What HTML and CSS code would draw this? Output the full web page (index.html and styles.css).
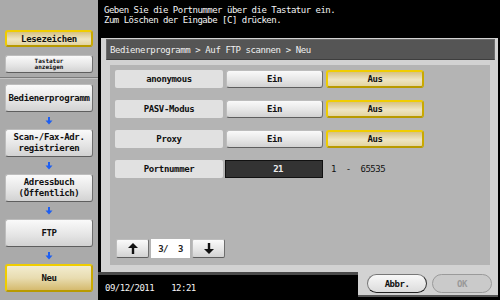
FILE: index.html
```html
<!DOCTYPE html>
<html lang="de">
<head>
  <meta charset="UTF-8" />
  <title>Bedienerprogramm — Auf FTP scannen</title>
  <link rel="stylesheet" href="styles.css">
</head>
<body>

<div class="screen">
  <div class="sidebar">
    <div class="side-top">
      <div class="btn yellow side-btn">Lesezeichen</div>
      <div class="btn side-btn small"><span>Tastatur</span><span>anzeigen</span></div>
    </div>
    <div class="side-steps">
      <div class="btn side-btn step">Bedienerprogramm</div>
      <div class="down"><svg width="8" height="8" viewBox="0 0 8 8"><rect x="3" y="0" width="2" height="4" fill="#1d5ef2"/><polygon points="0.5,3.5 7.5,3.5 4,7.5" fill="#1d5ef2"/></svg></div>
      <div class="btn side-btn step">Scan-/Fax-Adr.<br>registrieren</div>
      <div class="down"><svg width="8" height="8" viewBox="0 0 8 8"><rect x="3" y="0" width="2" height="4" fill="#1d5ef2"/><polygon points="0.5,3.5 7.5,3.5 4,7.5" fill="#1d5ef2"/></svg></div>
      <div class="btn side-btn step">Adressbuch<br>(Öffentlich)</div>
      <div class="down"><svg width="8" height="8" viewBox="0 0 8 8"><rect x="3" y="0" width="2" height="4" fill="#1d5ef2"/><polygon points="0.5,3.5 7.5,3.5 4,7.5" fill="#1d5ef2"/></svg></div>
      <div class="btn side-btn step">FTP</div>
      <div class="down"><svg width="8" height="8" viewBox="0 0 8 8"><rect x="3" y="0" width="2" height="4" fill="#1d5ef2"/><polygon points="0.5,3.5 7.5,3.5 4,7.5" fill="#1d5ef2"/></svg></div>
      <div class="btn yellow side-btn step">Neu</div>
    </div>
  </div>

  <div class="main">
    <div class="message">
      Geben Sie die Portnummer über die Tastatur ein.<br>
      Zum Löschen der Eingabe [C] drücken.
    </div>

    <div class="panel">
      <div class="crumbs">Bedienerprogramm &gt; Auf FTP scannen &gt; Neu</div>
      <div class="content">
        <div class="row">
          <div class="label">anonymous</div>
          <div class="btn opt">Ein</div>
          <div class="btn yellow opt">Aus</div>
        </div>
        <div class="row">
          <div class="label">PASV-Modus</div>
          <div class="btn opt">Ein</div>
          <div class="btn yellow opt">Aus</div>
        </div>
        <div class="row">
          <div class="label">Proxy</div>
          <div class="btn opt">Ein</div>
          <div class="btn yellow opt">Aus</div>
        </div>
        <div class="row">
          <div class="label">Portnummer</div>
          <div class="value">21</div>
          <div class="range">1 &nbsp;- &nbsp;65535</div>
        </div>

        <div class="pager">
          <div class="btn pg"><svg width="10" height="11" viewBox="0 0 10 11"><rect x="3.8" y="3" width="2.4" height="8" fill="#111"/><polygon points="0,5 5,0 10,5" fill="#111"/></svg></div>
          <div class="page">3/ &nbsp;3</div>
          <div class="btn pg"><svg width="10" height="11" viewBox="0 0 10 11"><rect x="3.8" y="0" width="2.4" height="8" fill="#111"/><polygon points="0,6 10,6 5,11" fill="#111"/></svg></div>
        </div>
      </div>
    </div>

    <div class="footer">
      <div class="stamp"><span>09/12/2011</span><span>12:21</span></div>
      <div class="actions">
        <div class="pill">Abbr.</div>
        <div class="pill off">OK</div>
      </div>
    </div>
  </div>
</div>

</body>
</html>
```

FILE: styles.css
```css
html, body {
  margin: 0; padding: 0;
  width: 500px; height: 300px;
  background: #000;
  overflow: hidden;
  font-family: "DejaVu Sans Mono", "Liberation Mono", monospace;
  font-size: 9px;
  letter-spacing: -0.5px;
}
.screen {
  display: grid;
  grid-template-columns: 98px 1fr;
  height: 300px;
}

/* left column */
.sidebar {
  background: #aaa;
  display: flex;
  flex-direction: column;
}
.side-top {
  height: 78px;
  box-sizing: border-box;
  padding: 30px 5px 0 5px;
  border-bottom: 1px solid #7a7a7a;
  box-shadow: 0 1px 0 #c4c4c4;
  display: flex;
  flex-direction: column;
  gap: 8px;
}
.side-steps {
  padding: 6px 5px 0 5px;
  display: flex;
  flex-direction: column;
}
.btn {
  box-sizing: border-box;
  display: flex;
  align-items: center;
  justify-content: center;
  text-align: center;
  color: #111;
  font-weight: bold;
  border-radius: 3px;
  background: linear-gradient(#fafafa, #e6e6e6 55%, #d2d2d2);
  border: 1px solid #bdbdbd;
  border-right-color: #6e6e6e;
  border-bottom-color: #5e5e5e;
}
.btn.yellow {
  border: 2px solid #f0cd00;
  border-right-color: #c9a900;
  border-bottom-color: #b89a00;
  background: linear-gradient(#d6c182, #eee5c3 55%, #e3d49f);
}
.side-btn {
  width: 88px;
  height: 17px;
  letter-spacing: -0.35px;
}
.side-btn.small {
  height: 18px;
  flex-direction: column;
  font-size: 6px;
  line-height: 6px;
  letter-spacing: 0;
}
.side-btn.step {
  height: 28px;
  line-height: 11px;
  letter-spacing: -0.35px;
}
.side-btn.step.yellow {
  background: linear-gradient(#f2ecd0, #e8dcb0 50%, #d5ba6e);
}
.down {
  height: 17px;
  display: flex;
  align-items: center;
  justify-content: center;
}

/* right column */
.main {
  display: flex;
  flex-direction: column;
  background: #000;
}
.message {
  height: 38px;
  box-sizing: border-box;
  padding: 5px 6px 0 6px;
  color: #f4f4f4;
  line-height: 10px;
}
.panel {
  height: 234px;
  box-sizing: border-box;
  margin: 0 2px 0 3px;
  padding: 1px 3px 7px 5px;
  background: #d2d2d2;
  display: flex;
  flex-direction: column;
}
.crumbs {
  height: 21px;
  box-sizing: border-box;
  background: #555;
  border: 1px solid #6c6c6c;
  border-bottom-color: #3e3e3e;
  color: #f0f0f0;
  padding-left: 3px;
  display: flex;
  align-items: center;
  letter-spacing: -0.4px;
}
.content {
  flex: 1;
  margin: 5px 5px 0 4px;
  padding: 5px 5px 7px 5px;
  background: #b4b4b4;
  display: flex;
  flex-direction: column;
  gap: 12px;
}
.row {
  display: grid;
  grid-template-columns: 108px 97px 98px;
  gap: 3px;
  height: 18px;
}
.label {
  background: #e1e1e1;
  border-radius: 2px;
  display: flex;
  align-items: center;
  justify-content: center;
  font-weight: bold;
  color: #111;
  letter-spacing: -0.35px;
}
.opt {
  height: 18px;
}
.value {
  background: #333;
  border: 1px solid #111;
  margin-left: -1px;
  color: #eee;
  font-weight: bold;
  display: flex;
  align-items: center;
  justify-content: flex-end;
  padding-right: 39px;
}
.range {
  color: #111;
  display: flex;
  align-items: center;
  padding-left: 5px;
}
.pager {
  margin-top: auto;
  display: flex;
  gap: 2px;
  height: 19px;
  margin-left: 1px;
}
.pg {
  width: 33px;
  border-radius: 2px;
}
.page {
  width: 39px;
  background: #fff;
  display: flex;
  align-items: center;
  justify-content: center;
  font-weight: bold;
  color: #222;
}

.footer {
  display: flex;
  height: 28px;
}
.stamp {
  flex: 1;
  border-top: 3px solid #4a4a4a;
  color: #f4f4f4;
  display: flex;
  gap: 17px;
  align-items: center;
  padding: 0 0 0 7px;
}
.actions {
  width: 140px;
  height: 23px;
  margin-right: 2px;
  background: #d2d2d2;
  box-shadow: 0 2px 0 #555;
  display: flex;
  gap: 5px;
  padding: 2px 0 0 9px;
  box-sizing: border-box;
}
.pill {
  width: 60px;
  height: 19px;
  box-sizing: border-box;
  border-radius: 10px;
  border: 1px solid #777;
  border-right-color: #333;
  border-bottom-color: #222;
  background: linear-gradient(#f8f8f8, #dcdcdc);
  display: flex;
  align-items: center;
  justify-content: center;
  font-weight: bold;
  color: #111;
}
.pill.off {
  border-color: #9a9a9a;
  background: #cacaca;
  color: #999;
}
```
